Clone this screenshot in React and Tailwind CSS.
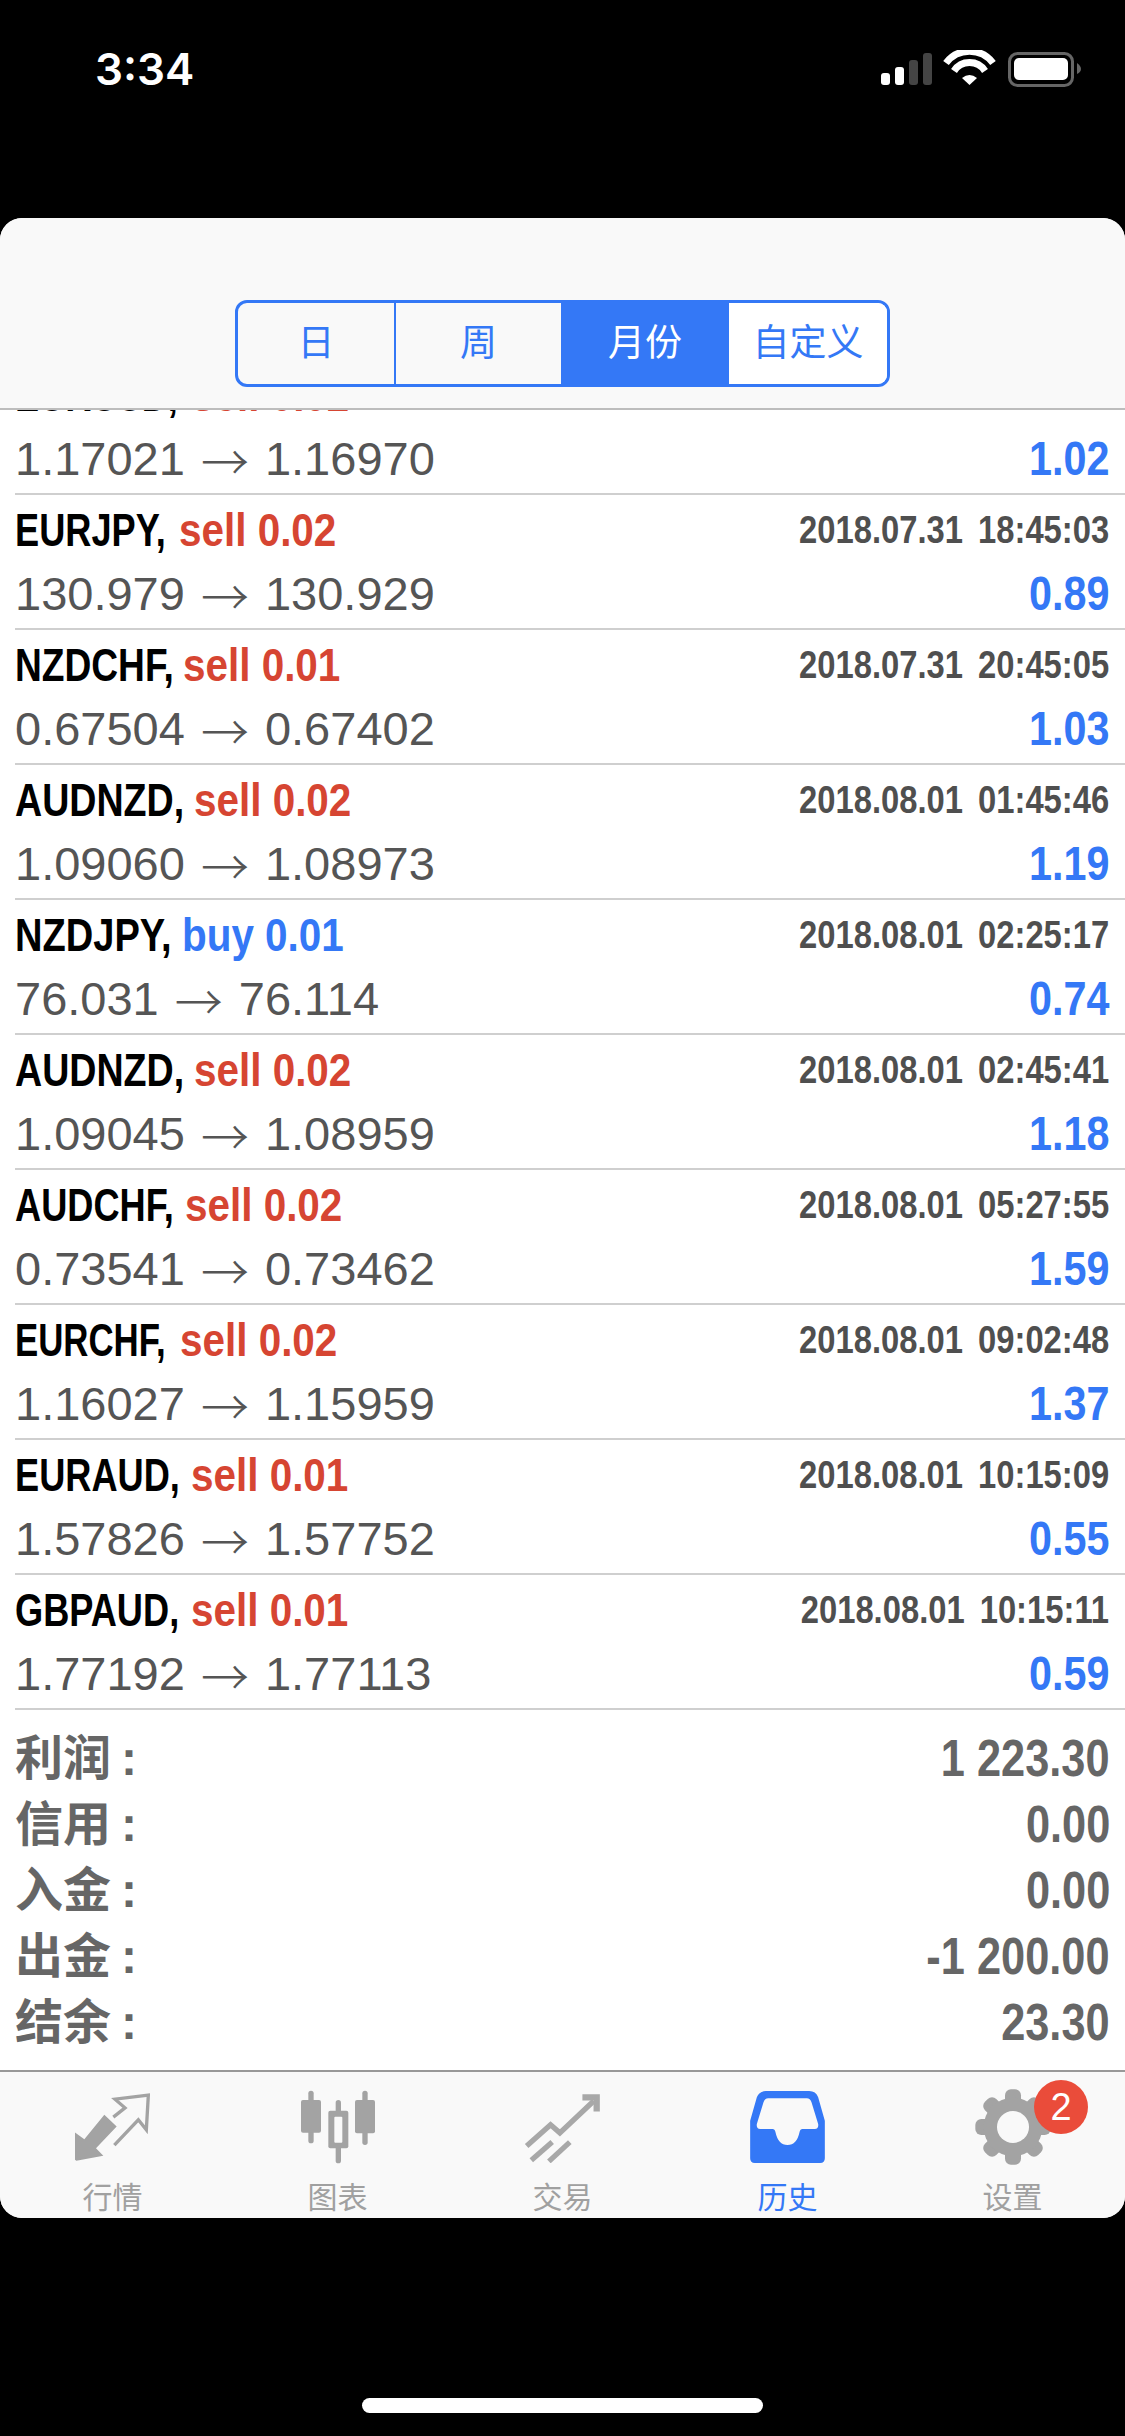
const rows = [
  ["EURJPY", "sell", "0.02", "2018.07.31", "18:45:03", "130.979", "130.929", "0.89", "w-[164px]", "scale-x-[.77]"],
  ["NZDCHF", "sell", "0.01", "2018.07.31", "20:45:05", "0.67504", "0.67402", "1.03", "w-[168px]", "scale-x-[.79]"],
  ["AUDNZD", "sell", "0.02", "2018.08.01", "01:45:46", "1.09060", "1.08973", "1.19", "w-[179px]", "scale-x-[.8]"],
  ["NZDJPY", "buy", "0.01", "2018.08.01", "02:25:17", "76.031", "76.114", "0.74", "w-[167px]", "scale-x-[.81]"],
  ["AUDNZD", "sell", "0.02", "2018.08.01", "02:45:41", "1.09045", "1.08959", "1.18", "w-[179px]", "scale-x-[.8]"],
  ["AUDCHF", "sell", "0.02", "2018.08.01", "05:27:55", "0.73541", "0.73462", "1.59", "w-[170px]", "scale-x-[.77]"],
  ["EURCHF", "sell", "0.02", "2018.08.01", "09:02:48", "1.16027", "1.15959", "1.37", "w-[165px]", "scale-x-[.74]"],
  ["EURAUD", "sell", "0.01", "2018.08.01", "10:15:09", "1.57826", "1.57752", "0.55", "w-[176px]", "scale-x-[.77]"],
  ["GBPAUD", "sell", "0.01", "2018.08.01", "10:15:11", "1.77192", "1.77113", "0.59", "w-[176px]", "scale-x-[.77]"],
];

const summary = [
  ["利润", "1 223.30"],
  ["信用", "0.00"],
  ["入金", "0.00"],
  ["出金", "-1 200.00"],
  ["结余", "23.30"],
];

const Row = ({ r }) => (
  <div className="h-[135px] shrink-0 ml-[15px] pr-4 border-b-[2px] border-[#cfcfcf]">
    <div className="h-[68px] flex items-center justify-between">
      <div className="flex text-[47px] leading-none font-bold whitespace-nowrap">
        <span className={"block " + r[8]}>
          <span className={"inline-block text-black origin-left " + r[9]}>{r[0]},</span>
        </span>
        <span className={"block origin-left scale-x-[.86] " + (r[1] === "buy" ? "text-[#3478f6]" : "text-[#d64532]")}>{r[1]} {r[2]}</span>
      </div>
      <div className="text-[39px] leading-none font-bold text-[#4f4f4f] whitespace-nowrap origin-right scale-x-[.84] [word-spacing:7px]">
        {r[3]} {r[4]}
      </div>
    </div>
    <div className="h-[61px] flex items-center justify-between">
      <div className="text-[47px] leading-none text-[#555] whitespace-nowrap flex items-center">
        {r[5]}
        <span className="mx-[16px] text-[48px] leading-none font-light font-['Noto_Sans_CJK_SC',sans-serif]">→</span>
        {r[6]}
      </div>
      <div className="text-[48px] leading-none font-bold text-[#3478f6] whitespace-nowrap origin-right scale-x-[.86]">{r[7]}</div>
    </div>
  </div>
);

const Segment = () => (
  <div className="w-[655px] h-[87px] flex border-[3px] border-[#3478f6] rounded-[12px] overflow-hidden text-[37px] text-[#3478f6]">
    <div className="w-[158px] flex items-center justify-center border-r-[2px] border-[#3478f6]">日</div>
    <div className="w-[165px] flex items-center justify-center">周</div>
    <div className="w-[168px] flex items-center justify-center bg-[#3478f6] text-white">月份</div>
    <div className="flex-1 flex items-center justify-center bg-white">自定义</div>
  </div>
);

const Tab = ({ label, active, children }) => (
  <div className="relative flex-1 flex flex-col items-center">
    <div className="h-[82px] mt-[14px] flex items-center justify-center">{children}</div>
    <div className={"mt-[13px] text-[30px] leading-[34px] " + (active ? "text-[#3478f6]" : "text-[#a0a0a0]")}>{label}</div>
  </div>
);

const StatusIcons = () => (
  <svg width="210" height="40" viewBox="0 0 210 40">
    <rect x="6" y="23" width="9" height="12" rx="3" fill="#fff" />
    <rect x="20" y="17" width="9" height="18" rx="3" fill="#fff" />
    <rect x="34" y="10" width="9" height="25" rx="3" fill="#444" />
    <rect x="48" y="3" width="9" height="32" rx="3" fill="#444" />
    <path d="M71 13 A29.5 29.5 0 0 1 118 13" fill="none" stroke="#fff" strokeWidth="7" />
    <path d="M79 21 A18.5 18.5 0 0 1 110 21" fill="none" stroke="#fff" strokeWidth="7" />
    <path d="M87 28 Q94.5 22 102 28 L94.5 35 Z" fill="#fff" />
    <rect x="134.5" y="3.5" width="63" height="32" rx="8" fill="none" stroke="#666" strokeWidth="3" />
    <rect x="139" y="8" width="54" height="22" rx="5" fill="#fff" />
    <path d="M202 13 Q206 16 206 19 Q206 22 202 24 Z" fill="#666" />
  </svg>
);

const MarketIcon = () => (
  <svg width="75" height="68" viewBox="72 40 225 203">
    <path d="M72 158 L100 178 L160 105 L197 140 L135 205 L157 228 L76 243 L72 240 Z" fill="#a3a3a3" />
    <path d="M187 112 L222 84 L192 58 L292 46 L286 150 L262 120 L190 196" fill="none" stroke="#a3a3a3" strokeWidth="10" />
  </svg>
);

const ChartIcon = () => (
  <svg width="76" height="74" viewBox="745 30 228 222" fill="#a3a3a3">
    <rect x="770" y="32" width="16" height="158" rx="8" />
    <rect x="748" y="60" width="60" height="98" rx="6" />
    <rect x="852" y="60" width="16" height="190" rx="8" />
    <rect x="830" y="92" width="60" height="113" rx="6" />
    <rect x="848" y="110" width="24" height="78" rx="3" fill="#f9f9f9" />
    <rect x="932" y="32" width="16" height="163" rx="8" />
    <rect x="910" y="60" width="60" height="100" rx="6" />
  </svg>
);

const TradeIcon = () => (
  <svg width="77" height="71" viewBox="70 30 232 212" fill="none" stroke="#a8a8a8" strokeWidth="16">
    <path d="M78 192 L150 128 L178 152 L280 56" />
    <path d="M92 235 L155 180" />
    <path d="M145 238 L208 180" />
    <path d="M246 45 L289 45 L289 88" strokeWidth="19" />
  </svg>
);

const HistoryIcon = () => (
  <svg width="75" height="72" viewBox="748 36 224 216">
    <path
      fillRule="evenodd"
      fill="#3478f6"
      d="M795 36 H925 Q945 36 952 55 L972 125 V238 Q972 252 958 252 H762 Q748 252 748 238 V125 L768 55 Q775 36 795 36 Z M802 58 H918 Q928 58 932 70 L952 135 Q954 150 942 150 H905 Q898 150 896 160 Q888 198 860 198 Q832 198 824 160 Q822 150 815 150 H778 Q766 150 768 135 L788 70 Q792 58 802 58 Z"
    />
  </svg>
);

const GearIcon = () => (
  <svg width="76" height="76" viewBox="-114 -114 228 228" fill="#a3a3a3">
    {[0, 45, 90, 135, 180, 225, 270, 315].map((a) => (
      <rect key={a} x="-24" y="-113" width="48" height="50" rx="18" transform={`rotate(${a})`} />
    ))}
    <circle r="88" />
    <circle r="48" fill="#f9f9f9" />
  </svg>
);

const App = () => (
  <div className="w-[1125px] h-[2436px] bg-black overflow-hidden relative font-['Liberation_Sans','Noto_Sans_CJK_SC',sans-serif]">
    <div className="h-[218px] flex items-start justify-between pl-[95px] pr-[40px] text-white">
      <div className="mt-[42px] text-[44px] leading-[54px] font-semibold font-['Inter',sans-serif]">3:34</div>
      <div className="mt-[50px]"><StatusIcons /></div>
    </div>
    <div className="h-[2000px] rounded-[22px] overflow-hidden bg-white flex flex-col">
      <div className="h-[192px] shrink-0 bg-[#f9f9f9] border-b-[2px] border-[#bdbdbd] flex justify-center pt-[82px] relative z-10">
        <Segment />
      </div>
      {/* first row scrolled partly under the header */}
      <div className="h-[85px] shrink-0 overflow-hidden flex flex-col justify-end">
        <Row r={["EURUSD", "sell", "0.02", "", "", "1.17021", "1.16970", "1.02", "w-[177px]", "scale-x-[.77]"]} />
      </div>
      {rows.map((r, i) => <Row key={i} r={r} />)}
      <div className="flex-1 px-[15px] pt-[16px]">
        {summary.map(([k, v]) => (
          <div key={k} className="h-[66px] flex items-center justify-between text-[#666]">
            <span className="text-[48px] font-semibold">{k}<span className="ml-[10px] font-bold">:</span></span>
            <span className="text-[51px] font-bold origin-right scale-x-[.85]">{v}</span>
          </div>
        ))}
      </div>
      <div className="h-[148px] shrink-0 bg-[#f9f9f9] border-t-[2px] border-[#999] flex">
        <Tab label="行情"><MarketIcon /></Tab>
        <Tab label="图表"><ChartIcon /></Tab>
        <Tab label="交易"><TradeIcon /></Tab>
        <Tab label="历史" active><HistoryIcon /></Tab>
        <Tab label="设置">
          <GearIcon />
          <div className="absolute left-[134px] top-[8px] w-[54px] h-[54px] rounded-full bg-[#ea4c3a] text-white text-[38px] flex items-center justify-center">2</div>
        </Tab>
      </div>
    </div>
    <div className="w-[401px] h-[15px] mx-auto mt-[180px] rounded-full bg-white" />
  </div>
);

export default App;
